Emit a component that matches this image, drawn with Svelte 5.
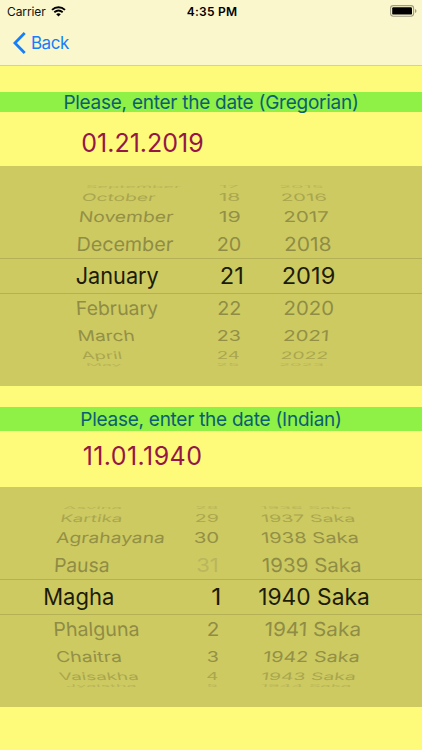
<script>
  // Each wheel row: height, text baseline, cap height, slant and ink colour.
  const rows = [
    { h: 4, base: 3.2, cap: 2.8, slant: 14, color: '#b8b556' },
    { h: 15, base: 12, cap: 7.4, slant: 11, color: '#a9a64e' },
    { h: 23, base: 18.2, cap: 10.8, slant: 7, color: '#939046' },
    { h: 31, base: 24, cap: 14, slant: 3, color: '#8f8c45' },
    { h: 36, base: 26.2, cap: 16.5, slant: 0, color: '#1d1c08' },
    { h: 27, base: 21.2, cap: 14, slant: -3, color: '#8f8c45' },
    { h: 24, base: 20, cap: 10.8, slant: -7, color: '#939046' },
    { h: 17, base: 14, cap: 7.4, slant: -11, color: '#a9a64e' },
    { h: 4, base: 3.8, cap: 2.8, slant: -14, color: '#b8b556' }
  ];

  // Columns hold [label, left edge, right edge] for each row of the wheel.
  const gregorian = [
    { lean: 1, items: [['September', 86, 180], ['October', 82, 154], ['November', 79, 172], ['December', 77, 172], ['January', 76.5, 158], ['February', 77, 157.5], ['March', 79, 134.5], ['April', 83, 122], ['May', 87, 121]] },
    { lean: 0, items: [['17', 220, 238], ['18', 219.5, 239.5], ['19', 219.5, 240], ['20', 217.5, 240.5], ['21', 220.5, 243], ['22', 218, 240.5], ['23', 217.5, 240], ['24', 217.5, 239], ['25', 217, 238.5]] },
    { lean: -0.6, items: [['2015', 280, 323], ['2016', 282, 326.5], ['2017', 284.5, 328.5], ['2018', 285, 331], ['2019', 282.5, 334.5], ['2020', 284, 333], ['2021', 283.5, 328], ['2022', 281, 327], ['2023', 279.5, 323]] }
  ];
  const indian = [
    { lean: 1, items: [['Asvina', 64, 121], ['Kartika', 60.5, 121], ['Agrahayana', 56.5, 163.5], ['Pausa', 54.5, 108.5], ['Magha', 44, 113.5], ['Phalguna', 54.5, 139], ['Chaitra', 57.5, 121.5], ['Vaisakha', 60.5, 138.5], ['Jyaistha', 67, 136]] },
    { lean: 0, items: [['28', 196, 217.5], ['29', 195.5, 218], ['30', 194.5, 218.5], ['31', 197, 218, '#b9b65c'], ['1', 212, 220.5], ['2', 207.5, 218.5], ['3', 207.5, 218], ['4', 207, 217.5], ['5', 207, 217]] },
    { lean: -0.8, items: [['1936 Saka', 261, 351], ['1937 Saka', 262.5, 355], ['1938 Saka', 262.5, 358.5], ['1939 Saka', 263, 361], ['1940 Saka', 259, 369], ['1941 Saka', 265, 360], ['1942 Saka', 263.5, 358.5], ['1943 Saka', 261.5, 354.5], ['1944 Saka', 261, 350.5]] }
  ];
  const FONT = 22.7;
  const CAP = FONT * 0.727;
</script>

{#snippet wheel(columns)}
  <div class="picker">
    {#each rows as row, i}
      <svg class="row" class:selected={i === 4} width="422" height={row.h}>
        {#each columns as col}
          {@const item = col.items[i]}
          <text
            transform={`translate(${item[1] - 0.8} ${row.base}) skewX(${-row.slant * col.lean}) scale(1 ${row.cap / CAP})`}
            font-size={FONT}
            textLength={item[2] - item[1] + 1.6}
            lengthAdjust="spacingAndGlyphs"
            fill={item[3] ?? row.color}>{item[0]}</text>
        {/each}
      </svg>
    {/each}
  </div>
{/snippet}

<div class="screen">
  <header>
    <div class="status">
      <div class="carrier">
        <span>Carrier</span>
        <svg width="15" height="11" viewBox="0 0 15 11">
          <path d="M1 3.9C4.8.4 10.2.4 14 3.9" fill="none" stroke="#000" stroke-width="1.9" />
          <path d="M3.3 6.3c2.5-2.2 5.9-2.2 8.4 0" fill="none" stroke="#000" stroke-width="1.8" />
          <path d="M5.2 8.2c1.4-1.2 3.2-1.2 4.6 0L7.5 10.6z" />
        </svg>
      </div>
      <div class="time">4:35 PM</div>
      <svg class="battery" width="28" height="12" viewBox="0 0 28 12">
        <rect x=".6" y=".6" width="23" height="10.6" rx="2.6" fill="none" stroke="#9f9d83" stroke-width="1.1" />
        <rect x="2.2" y="2.2" width="19.8" height="7.4" rx="1.2" />
        <path d="M25 4v4q1.5-.5 1.5-2T25 4z" fill="#9f9d83" />
      </svg>
    </div>
    <div class="nav">
      <svg width="13" height="22" viewBox="0 0 13 22">
        <path d="M11.7 1.1 1.9 11l9.8 9.9" fill="none" stroke="#157efb" stroke-width="2.8" />
      </svg>
      <span>Back</span>
    </div>
  </header>

  <div class="prompt first">Please, enter the date (Gregorian)</div>
  <div class="value first"><span>01.21.2019</span></div>
  {@render wheel(gregorian)}

  <div class="prompt second">Please, enter the date (Indian)</div>
  <div class="value second"><span>11.01.1940</span></div>
  {@render wheel(indian)}
</div>

<style>
  :global(body) { margin: 0; background: #fffb7a; }
  .screen {
    width: 422px;
    height: 750px;
    overflow: hidden;
    background: #fffb7a;
    font-family: Inter, 'Liberation Sans', sans-serif;
  }
  header {
    box-sizing: border-box;
    height: 66px;
    background: #faf7cd;
    border-bottom: 1px solid #d3d1a8;
  }
  .status {
    display: grid;
    grid-template-columns: 1fr auto 1fr;
    align-items: center;
    height: 22px;
    padding: 0 5px 0 7px;
    font-size: 12px;
    color: #111;
  }
  .carrier { display: flex; align-items: center; gap: 5.5px; }
  .carrier span { letter-spacing: -0.1px; }
  .time { font-weight: 600; color: #000; letter-spacing: 0.22px; }
  .battery { justify-self: end; margin-right: -1px; }
  .nav {
    display: flex;
    align-items: center;
    gap: 5px;
    height: 42px;
    padding-left: 13px;
    font-size: 17px;
    letter-spacing: -0.5px;
    color: #157efb;
  }
  .prompt {
    text-align: center;
    background: #8ff046;
    color: #0a5f70;
    font-size: 19px;
    letter-spacing: -0.26px;
    white-space: nowrap;
  }
  .prompt.first { margin-top: 26px; height: 20px; line-height: 21px; }
  .prompt.second { margin-top: 21px; height: 24px; line-height: 25px; }
  .value {
    width: 285px;
    text-align: center;
    font-size: 25px;
    color: #941747;
  }
  .value.first { height: 54px; line-height: 62px; }
  .value.second { height: 56px; line-height: 51px; letter-spacing: 0.42px; }
  .picker {
    box-sizing: border-box;
    display: flex;
    flex-direction: column;
    height: 220px;
    padding-top: 19px;
    background: #cdca62;
  }
  .row { display: block; flex: none; overflow: visible; }
  .row.selected { box-shadow: inset 0 1px #b3b055, inset 0 -1px #b3b055; }
</style>
